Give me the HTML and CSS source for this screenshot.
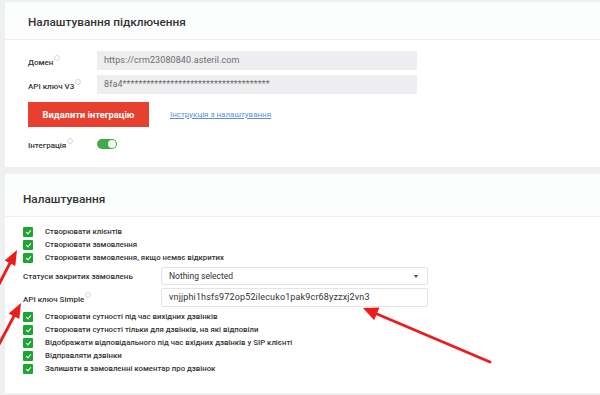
FILE: index.html
```html
<!DOCTYPE html>
<html lang="uk">
  <head>
    <meta charset="UTF-8" />
    <title>Налаштування</title>
    <link rel="stylesheet" href="styles.css">
  </head>
  <body>
    <div class="card card-connect">
      <div class="card-head">Налаштування підключення</div>
      <div class="card-body">
        <div class="row">
          <label class="label">Домен<i class="hint"></i></label>
          <div class="field">https://crm23080840.asteril.com</div>
        </div>
        <div class="row">
          <label class="label">API ключ V3<i class="hint"></i></label>
          <div class="field">8fa4*************************************</div>
        </div>
        <div class="actions">
          <button type="button" class="btn-danger">Видалити інтеграцію</button>
          <a class="link" href="#">Інструкція з налаштування</a>
        </div>
        <div class="row row-toggle">
          <label class="label">Інтеграція<i class="hint"></i></label>
          <span class="toggle"></span>
        </div>
      </div>
    </div>

    <div class="card card-settings">
      <div class="card-head">Налаштування</div>
      <div class="card-body">
        <div class="check"><span class="box"></span>Створювати клієнтів</div>
        <div class="check"><span class="box"></span>Створювати замовлення</div>
        <div class="check"><span class="box"></span>Створювати замовлення, якщо немає відкритих</div>

        <div class="row row-wide">
          <label class="label">Статуси закритих замовлень</label>
          <div class="select">Nothing selected<span class="caret"></span></div>
        </div>
        <div class="row row-wide">
          <label class="label">API ключ Simple<i class="hint"></i></label>
          <div class="input">vnjjphi1hsfs972op52ilecuko1pak9cr68yzzxj2vn3</div>
        </div>

        <div class="check"><span class="box"></span>Створювати сутності під час вихідних дзвінків</div>
        <div class="check"><span class="box"></span>Створювати сутності тільки для дзвінків, на які відповіли</div>
        <div class="check"><span class="box"></span>Відображати відповідального під час вхідних дзвінків у SIP клієнті</div>
        <div class="check"><span class="box"></span>Відправляти дзвінки</div>
        <div class="check"><span class="box"></span>Залишати в замовленні коментар про дзвінок</div>
      </div>
    </div>

    <!-- red annotation arrows -->
    <svg class="arrows" width="600" height="395" viewBox="0 0 600 395">
      <g stroke="#ec1c1c" stroke-width="2.8" stroke-linecap="round">
        <line x1="-5" y1="292" x2="10" y2="263" />
        <line x1="-5" y1="352" x2="14" y2="316" />
        <line x1="490" y1="362" x2="377" y2="314" />
      </g>
      <g fill="#ec1c1c">
        <polygon points="17,250 15.3,266.1 4.7,260.5" />
        <polygon points="21,303 19.3,319 8.7,313.4" />
        <polygon points="363,308 379.5,307.5 374.1,320.3" />
      </g>
    </svg>
  </body>
</html>
```

FILE: styles.css
```css
body {
  margin: 0;
  padding: 2px 0 0 5px;
  background-color: #eff0f2;
  font-family: Roboto, "Liberation Sans", sans-serif;
  color: #333;
  position: relative;
  height: 393px;
  overflow: hidden;
}
.card {
  background: white;
  margin-bottom: 7px;
}
.card-head {
  background: #fcfdfd;
  border-bottom: 1px solid #eeeff1;
  font-size: 11.8px;
  font-weight: 500;
  color: #333;
}
.card-connect .card-head {
  height: 37px;
  line-height: 40px;
  padding-left: 23px;
}
.card-connect .card-body {
  padding: 11px 0 17px 23px;
}
.card-settings .card-head {
  height: 42px;
  line-height: 50px;
  padding-left: 18px;
}
.card-settings .card-body {
  padding: 8px 0 18px 18px;
}
.row {
  display: flex;
  align-items: center;
  margin-bottom: 5px;
}
.label {
  width: 69px;
  font-size: 8px;
  font-weight: 500;
  color: #333;
}
.hint {
  display: inline-block;
  width: 4px;
  height: 4px;
  border: 1px solid #d6d7d9;
  border-radius: 50%;
  vertical-align: 4px;
  margin-left: 1px;
}
.field {
  width: 313px;
  height: 19px;
  line-height: 19px;
  padding-left: 7px;
  background: #eeeef0;
  font-size: 9px;
  color: #6b6b6b;
  letter-spacing: 0.1px;
}
.actions {
  display: flex;
  align-items: center;
  margin: 8px 0 11px;
}
.btn-danger {
  width: 121px;
  height: 25px;
  border: none;
  background: #e8402f;
  color: white;
  font-family: inherit;
  font-size: 9.3px;
  font-weight: 700;
  padding: 0;
}
.link {
  margin-left: 21px;
  font-size: 8px;
  color: #5b8fd6;
  text-decoration: underline;
}
.row-toggle {
  margin-bottom: 0;
}
.toggle {
  position: relative;
  width: 20px;
  height: 10px;
  border-radius: 5px;
  background: #46a94d;
}
.toggle::after {
  content: "";
  position: absolute;
  right: 1px;
  top: 1px;
  width: 8px;
  height: 8px;
  border-radius: 50%;
  background: #f4f9f4;
}
.check {
  display: flex;
  align-items: center;
  height: 13px;
  font-size: 7.8px;
  font-weight: 500;
  color: #333;
}
.box {
  position: relative;
  width: 10px;
  height: 10px;
  margin-right: 12px;
  background: #1fa533;
  border-radius: 1px;
}
.box::after {
  content: "";
  position: absolute;
  left: 3.5px;
  top: 2px;
  width: 2px;
  height: 4px;
  border: solid white;
  border-width: 0 1.5px 1.5px 0;
  transform: rotate(40deg);
}
.row-wide {
  margin: 3px 0 3px;
}
.row-wide .label {
  width: 138px;
}
.select,
.input {
  position: relative;
  box-sizing: border-box;
  width: 267px;
  padding-left: 7px;
  border: 1px solid #e3e4e6;
  border-radius: 2px;
  background: white;
  font-size: 9px;
  color: #333;
}
.select {
  height: 18px;
  line-height: 16px;
  font-size: 8.5px;
}
.input {
  height: 19px;
  line-height: 17px;
  letter-spacing: 0.15px;
}
.caret {
  position: absolute;
  right: 9px;
  top: 7px;
  border-left: 2.5px solid transparent;
  border-right: 2.5px solid transparent;
  border-top: 3px solid #444;
}
.arrows {
  position: absolute;
  left: 0;
  top: 0;
  pointer-events: none;
}
```
